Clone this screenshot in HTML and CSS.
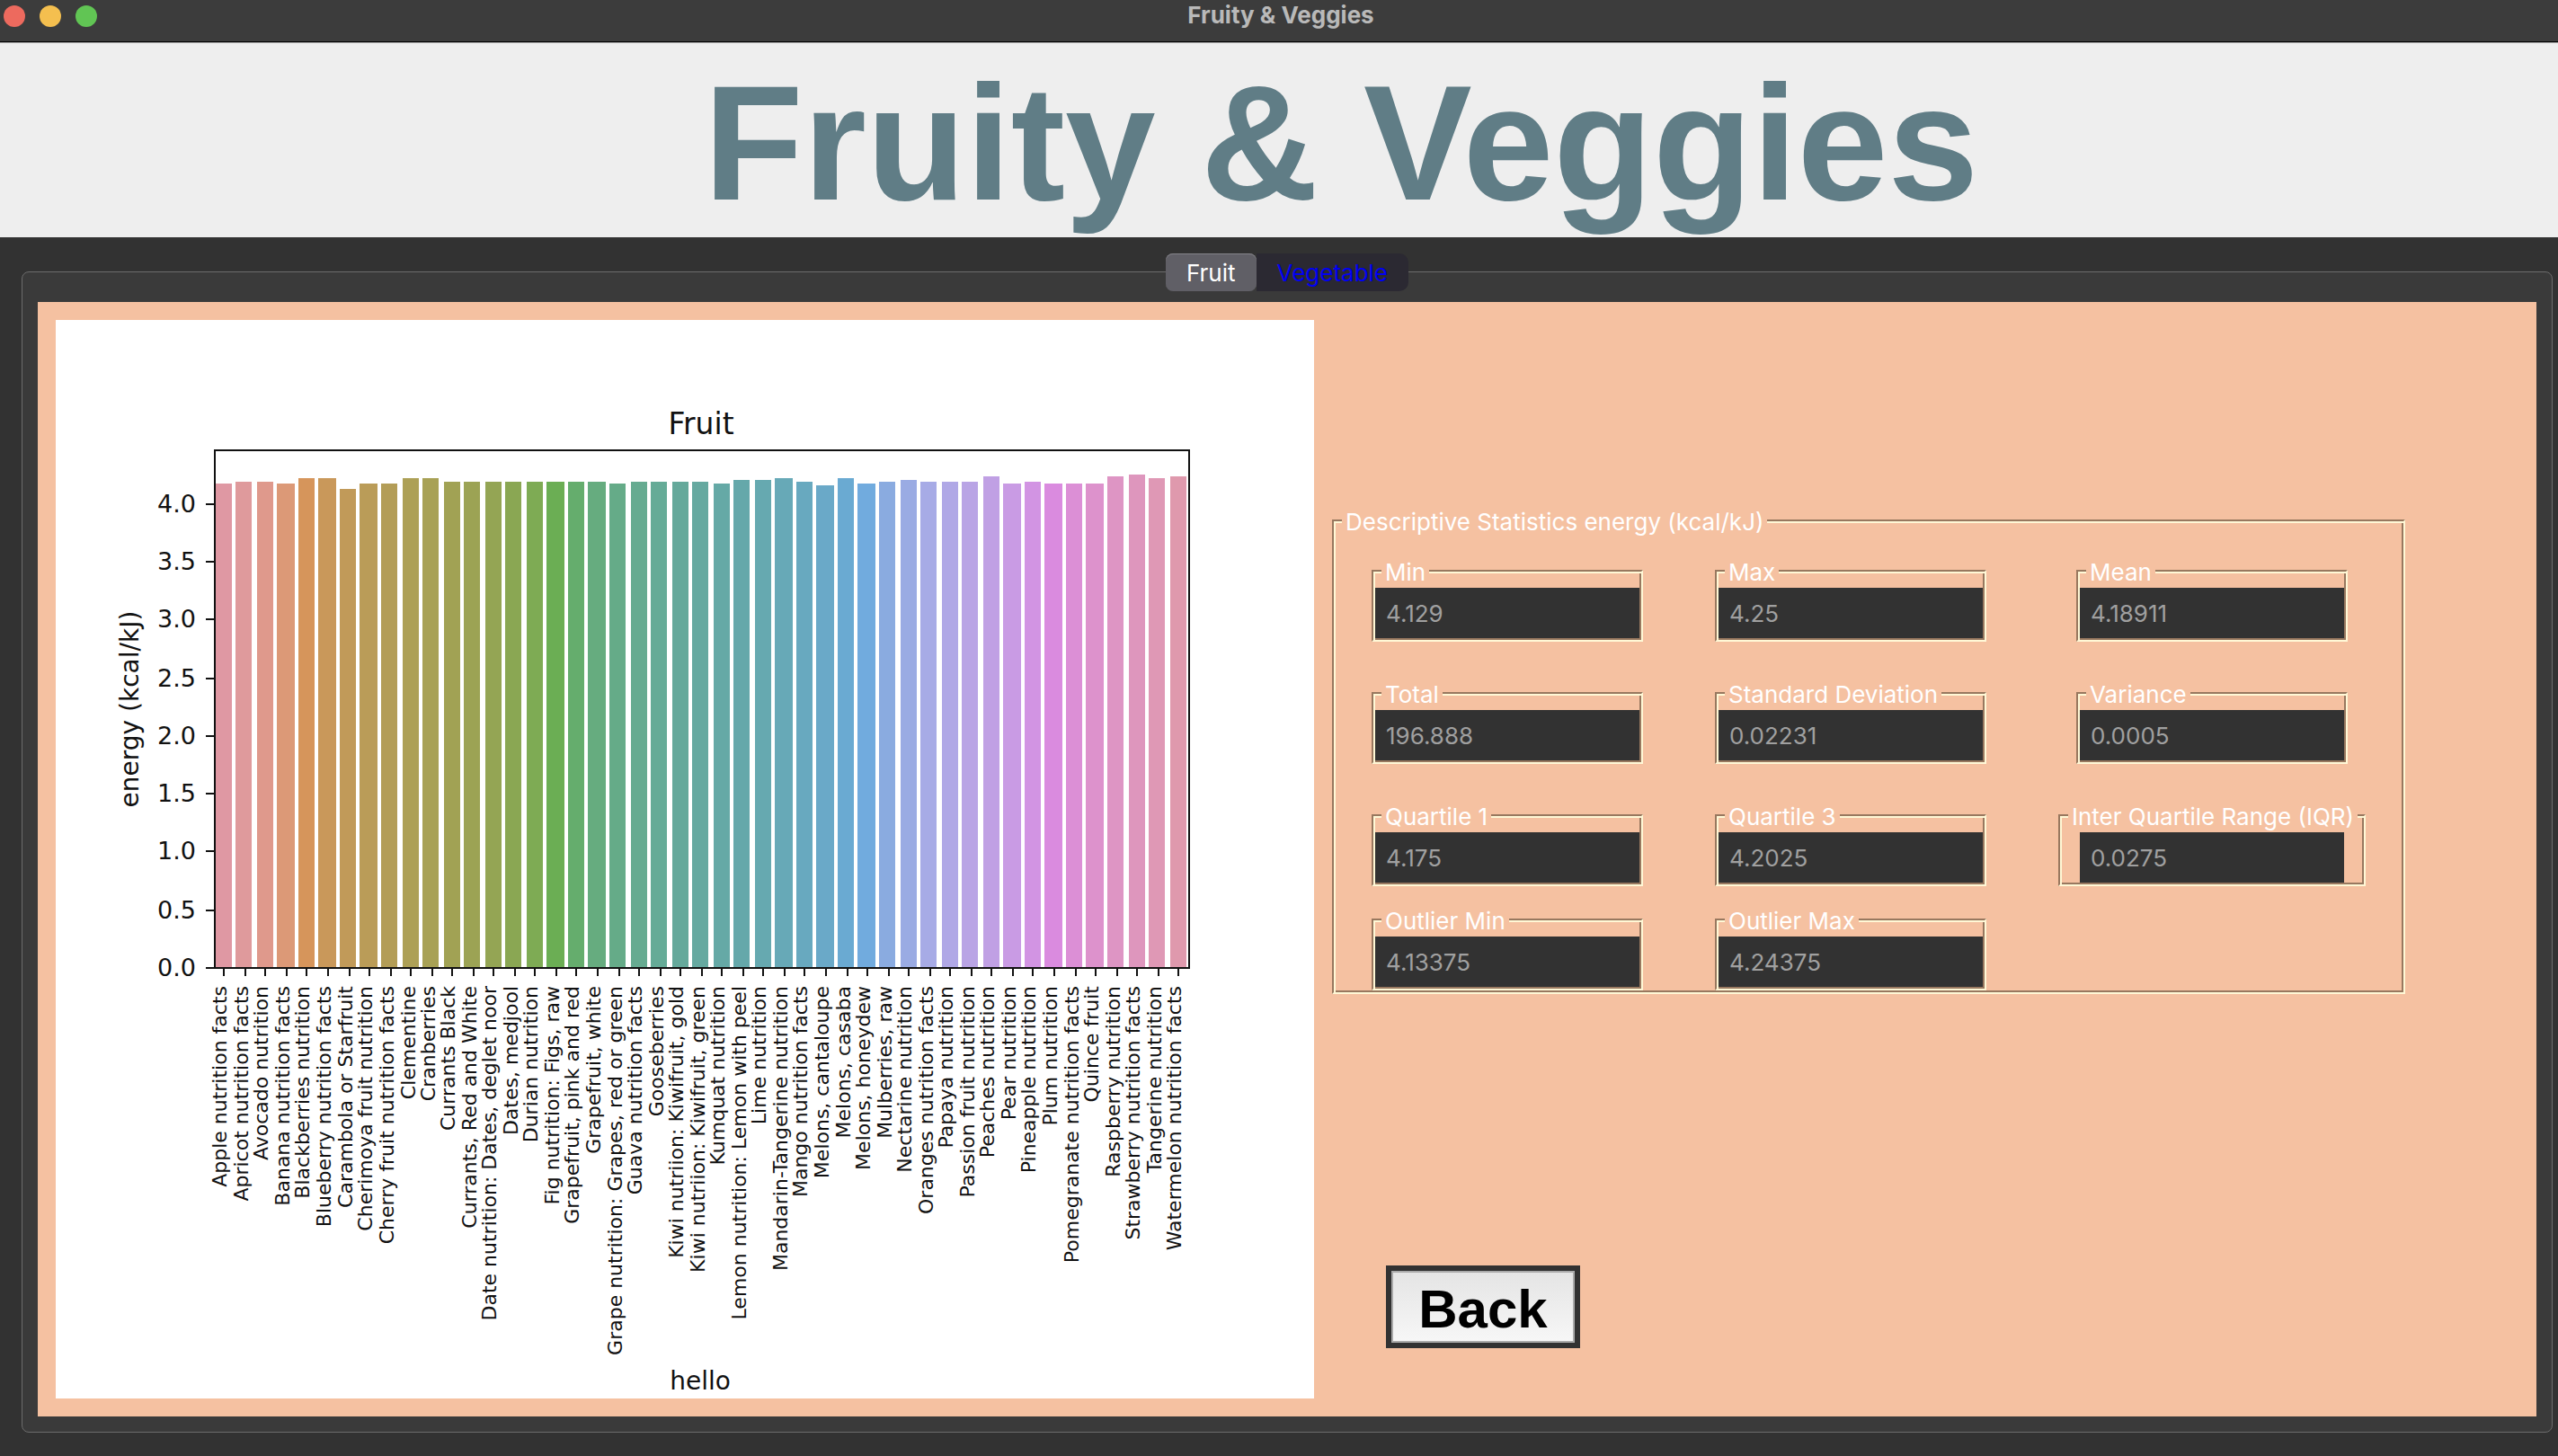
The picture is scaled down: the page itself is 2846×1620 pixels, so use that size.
FILE: index.html
```html
<!DOCTYPE html>
<html lang="en">
<head>
<meta charset="utf-8">
<title>Fruity &amp; Veggies</title>
<link rel="stylesheet" href="styles.css">
</head>
<body>
<div class="titlebar">
  <span class="lights"><i class="light light-close"></i><i class="light light-min"></i><i class="light light-max"></i></span>
  <span class="window-title">Fruity &amp; Veggies</span>
</div>
<header class="banner"><h1 class="banner-title">Fruity &amp; Veggies</h1></header>
<main class="main">
  <div class="tabs" role="tablist">
    <button class="tab tab-active" role="tab" aria-selected="true">Fruit</button><button class="tab tab-idle" role="tab" aria-selected="false">Vegetable</button>
  </div>
  <div class="pane">
    <div class="board">
      <figure class="figure">
        <svg class="chart" viewBox="0 0 1400 1200" role="img" aria-label="Fruit: energy (kcal/kJ)">
          <text class="chart-title" x="718" y="127">Fruit</text>
          <g class="bars">
            <path fill="#df98a3" d="M178 182h18v539h-18z"/>
            <path fill="#df9a9c" d="M200 180h18v541h-18z"/>
            <path fill="#df998c" d="M224 180h18v541h-18z"/>
            <path fill="#dc9977" d="M246 182h20v539h-20z"/>
            <path fill="#d6955b" d="M270 176h18v545h-18z"/>
            <path fill="#c9985a" d="M292 176h20v545h-20z"/>
            <path fill="#c19a59" d="M316 188h18v533h-18z"/>
            <path fill="#ba9c58" d="M338 182h20v539h-20z"/>
            <path fill="#b39d57" d="M362 182h18v539h-18z"/>
            <path fill="#ada056" d="M386 176h18v545h-18z"/>
            <path fill="#a8a155" d="M408 176h18v545h-18z"/>
            <path fill="#a1a254" d="M432 180h18v541h-18z"/>
            <path fill="#9ca354" d="M454 180h18v541h-18z"/>
            <path fill="#94a554" d="M478 180h18v541h-18z"/>
            <path fill="#8aa753" d="M500 180h18v541h-18z"/>
            <path fill="#7eab54" d="M524 180h18v541h-18z"/>
            <path fill="#6bae54" d="M546 180h20v541h-20z"/>
            <path fill="#65ad6d" d="M570 180h18v541h-18z"/>
            <path fill="#66ac7f" d="M592 180h20v541h-20z"/>
            <path fill="#65ab88" d="M616 182h18v539h-18z"/>
            <path fill="#66ab91" d="M640 180h18v541h-18z"/>
            <path fill="#65ab97" d="M662 180h18v541h-18z"/>
            <path fill="#65a99b" d="M686 180h18v541h-18z"/>
            <path fill="#66a9a0" d="M708 180h18v541h-18z"/>
            <path fill="#65a9a6" d="M732 182h18v539h-18z"/>
            <path fill="#65a8aa" d="M754 178h18v543h-18z"/>
            <path fill="#66a9b0" d="M778 178h18v543h-18z"/>
            <path fill="#67a9b7" d="M800 176h20v545h-20z"/>
            <path fill="#68a9bf" d="M824 180h18v541h-18z"/>
            <path fill="#6aa9c8" d="M846 184h20v537h-20z"/>
            <path fill="#6aaad2" d="M870 176h18v545h-18z"/>
            <path fill="#71abde" d="M892 182h20v539h-20z"/>
            <path fill="#8aabe0" d="M916 180h18v541h-18z"/>
            <path fill="#9aabe3" d="M940 178h18v543h-18z"/>
            <path fill="#a7abe6" d="M962 180h18v541h-18z"/>
            <path fill="#b0a8e6" d="M986 180h18v541h-18z"/>
            <path fill="#b9a4e5" d="M1008 180h18v541h-18z"/>
            <path fill="#c0a0e4" d="M1032 174h18v547h-18z"/>
            <path fill="#c99be4" d="M1054 182h20v539h-20z"/>
            <path fill="#d294e3" d="M1078 180h18v541h-18z"/>
            <path fill="#da8bdf" d="M1100 182h20v539h-20z"/>
            <path fill="#dc8fd6" d="M1124 182h18v539h-18z"/>
            <path fill="#dd92cc" d="M1146 182h20v539h-20z"/>
            <path fill="#de95c4" d="M1170 174h18v547h-18z"/>
            <path fill="#de96bd" d="M1194 172h18v549h-18z"/>
            <path fill="#df98b5" d="M1216 176h18v545h-18z"/>
            <path fill="#df99ad" d="M1240 174h18v547h-18z"/>
          </g>
          <path class="axis" d="M177 145H1261V721H177z"/>
          <path class="axis" d="M167 205h10M167 269h10M167 333h10M167 399h10M167 463h10M167 527h10M167 591h10M167 657h10M167 721h10"/>
          <path class="axis" d="M187 721v9M211 721v9M233 721v9M257 721v9M279 721v9M303 721v9M327 721v9M349 721v9M373 721v9M395 721v9M419 721v9M441 721v9M465 721v9M487 721v9M511 721v9M533 721v9M557 721v9M579 721v9M603 721v9M627 721v9M649 721v9M673 721v9M695 721v9M719 721v9M741 721v9M765 721v9M787 721v9M811 721v9M833 721v9M857 721v9M881 721v9M903 721v9M927 721v9M949 721v9M973 721v9M995 721v9M1019 721v9M1041 721v9M1065 721v9M1087 721v9M1111 721v9M1135 721v9M1157 721v9M1181 721v9M1203 721v9M1227 721v9M1249 721v9"/>
          <g class="y-labels">
            <text x="156" y="214">4.0</text>
            <text x="156" y="278">3.5</text>
            <text x="156" y="342">3.0</text>
            <text x="156" y="408">2.5</text>
            <text x="156" y="472">2.0</text>
            <text x="156" y="536">1.5</text>
            <text x="156" y="600">1.0</text>
            <text x="156" y="666">0.5</text>
            <text x="156" y="730">0.0</text>
          </g>
          <text class="axis-name" transform="translate(92 433) rotate(-90)">energy (kcal/kJ)</text>
          <g class="x-labels">
            <text transform="translate(190 741) rotate(-90)">Apple nutrition facts</text>
            <text transform="translate(214 741) rotate(-90)">Apricot nutrition facts</text>
            <text transform="translate(236 741) rotate(-90)">Avocado nutrition</text>
            <text transform="translate(260 741) rotate(-90)">Banana nutrition facts</text>
            <text transform="translate(282 741) rotate(-90)">Blackberries nutrition</text>
            <text transform="translate(306 741) rotate(-90)">Blueberry nutrition facts</text>
            <text transform="translate(330 741) rotate(-90)">Carambola or Starfruit</text>
            <text transform="translate(352 741) rotate(-90)">Cherimoya fruit nutrition</text>
            <text transform="translate(376 741) rotate(-90)">Cherry fruit nutrition facts</text>
            <text transform="translate(400 741) rotate(-90)">Clementine</text>
            <text transform="translate(422 741) rotate(-90)">Cranberries</text>
            <text transform="translate(444 741) rotate(-90)">Currants Black</text>
            <text transform="translate(468 741) rotate(-90)">Currants, Red and White</text>
            <text transform="translate(490 741) rotate(-90)">Date nutrition: Dates, deglet noor</text>
            <text transform="translate(514 741) rotate(-90)">Dates, medjool</text>
            <text transform="translate(536 741) rotate(-90)">Durian nutrition</text>
            <text transform="translate(560 741) rotate(-90)">Fig nutrition: Figs, raw</text>
            <text transform="translate(582 741) rotate(-90)">Grapefruit, pink and red</text>
            <text transform="translate(606 741) rotate(-90)">Grapefruit, white</text>
            <text transform="translate(630 741) rotate(-90)">Grape nutrition: Grapes, red or green</text>
            <text transform="translate(652 741) rotate(-90)">Guava nutrition facts</text>
            <text transform="translate(676 741) rotate(-90)">Gooseberries</text>
            <text transform="translate(698 741) rotate(-90)">Kiwi nutriion: Kiwifruit, gold</text>
            <text transform="translate(722 741) rotate(-90)">Kiwi nutriion: Kiwifruit, green</text>
            <text transform="translate(744 741) rotate(-90)">Kumquat nutrition</text>
            <text transform="translate(768 741) rotate(-90)">Lemon nutrition: Lemon with peel</text>
            <text transform="translate(790 741) rotate(-90)">Lime nutrition</text>
            <text transform="translate(814 741) rotate(-90)">Mandarin-Tangerine nutrition</text>
            <text transform="translate(836 741) rotate(-90)">Mango nutrition facts</text>
            <text transform="translate(860 741) rotate(-90)">Melons, cantaloupe</text>
            <text transform="translate(884 741) rotate(-90)">Melons, casaba</text>
            <text transform="translate(906 741) rotate(-90)">Melons, honeydew</text>
            <text transform="translate(930 741) rotate(-90)">Mulberries, raw</text>
            <text transform="translate(952 741) rotate(-90)">Nectarine nutrition</text>
            <text transform="translate(976 741) rotate(-90)">Oranges nutrition facts</text>
            <text transform="translate(998 741) rotate(-90)">Papaya nutrition</text>
            <text transform="translate(1022 741) rotate(-90)">Passion fruit nutrition</text>
            <text transform="translate(1044 741) rotate(-90)">Peaches nutrition</text>
            <text transform="translate(1068 741) rotate(-90)">Pear nutrition</text>
            <text transform="translate(1090 741) rotate(-90)">Pineapple nutrition</text>
            <text transform="translate(1114 741) rotate(-90)">Plum nutrition</text>
            <text transform="translate(1138 741) rotate(-90)">Pomegranate nutrition facts</text>
            <text transform="translate(1160 741) rotate(-90)">Quince fruit</text>
            <text transform="translate(1184 741) rotate(-90)">Raspberry nutrition</text>
            <text transform="translate(1206 741) rotate(-90)">Strawberry nutrition facts</text>
            <text transform="translate(1230 741) rotate(-90)">Tangerine nutrition</text>
            <text transform="translate(1252 741) rotate(-90)">Watermelon nutrition facts</text>
          </g>
          <text class="axis-name" x="717" y="1190">hello</text>
        </svg>
      </figure>
      <section class="side">
        <fieldset class="group">
          <legend class="legend">Descriptive Statistics energy (kcal/kJ)</legend>
          <div class="stats">
            <div class="stats-grid">
              <fieldset class="group"><legend class="legend"><label for="min">Min</label></legend><input class="value" id="min" value="4.129" readonly></fieldset>
              <fieldset class="group"><legend class="legend"><label for="max">Max</label></legend><input class="value" id="max" value="4.25" readonly></fieldset>
              <fieldset class="group"><legend class="legend"><label for="mean">Mean</label></legend><input class="value" id="mean" value="4.18911" readonly></fieldset>
              <fieldset class="group"><legend class="legend"><label for="total">Total</label></legend><input class="value" id="total" value="196.888" readonly></fieldset>
              <fieldset class="group"><legend class="legend"><label for="sd">Standard Deviation</label></legend><input class="value" id="sd" value="0.02231" readonly></fieldset>
              <fieldset class="group"><legend class="legend"><label for="var">Variance</label></legend><input class="value" id="var" value="0.0005" readonly></fieldset>
              <fieldset class="group"><legend class="legend"><label for="q1">Quartile 1</label></legend><input class="value" id="q1" value="4.175" readonly></fieldset>
              <fieldset class="group"><legend class="legend"><label for="q3">Quartile 3</label></legend><input class="value" id="q3" value="4.2025" readonly></fieldset>
              <fieldset class="group"><legend class="legend"><label for="iqr">Inter Quartile Range (IQR)</label></legend><div class="value-inset"><input class="value" id="iqr" value="0.0275" readonly></div></fieldset>
            </div>
            <div class="stats-grid stats-outliers">
              <fieldset class="group"><legend class="legend"><label for="omin">Outlier Min</label></legend><input class="value" id="omin" value="4.13375" readonly></fieldset>
              <fieldset class="group"><legend class="legend"><label for="omax">Outlier Max</label></legend><input class="value" id="omax" value="4.24375" readonly></fieldset>
            </div>
          </div>
        </fieldset>
        <button class="back">Back</button>
      </section>
    </div>
  </div>
</main>
</body>
</html>
```
FILE: styles.css
```css
* { box-sizing: border-box; }

body {
  margin: 0;
  min-height: 100vh;
  background: #323232;
  font-family: Inter, "Liberation Sans", sans-serif;
  font-size: 26px;
}

.titlebar {
  display: grid;
  grid-template-columns: 1fr auto 1fr;
  align-items: start;
  height: 48px;
  padding-left: 4px;
  background: #3c3c3c;
  border-bottom: 1px solid #a8a8a8;
  box-shadow: inset 0 -1px #000;
}
.lights { display: flex; gap: 16px; padding-top: 6px; }
.light { width: 24px; height: 24px; border-radius: 50%; }
.light-close { background: #ed6a5e; }
.light-min { background: #f4bf4f; }
.light-max { background: #61c554; }
.window-title { color: #b9b9b9; font-weight: 700; line-height: 34px; }

.banner { background: #eee; padding: 7px 0 0 138px; }
.banner-title {
  margin: 0;
  color: #607d86;
  font: bold 181px/209px "Liberation Sans", Arial, sans-serif;
  text-align: center;
  white-space: nowrap;
}

.main { padding: 18px 6px 26px 24px; }

.tabs { position: relative; display: flex; justify-content: center; }
.tab {
  height: 42px;
  padding: 0 23px;
  border: 0;
  font: inherit;
}
.tab-active {
  background: #605f66;
  color: #fff;
  border-radius: 8px;
  box-shadow: inset 0 1px #85848a;
}
.tab-idle {
  background: #2b2932;
  color: #0000f5;
  border-radius: 0 10px 10px 0;
}

.pane {
  margin-top: -22px;
  padding: 33px 17px 17px;
  background: #3a3a3a;
  border: 1px solid #6c6c6c;
  border-radius: 8px;
}
.board {
  display: flex;
  gap: 20px;
  padding: 20px;
  background: #f5c1a1;
}

.figure { flex: 35 1 0; margin: 0; background: #fff; }
.chart {
  display: block;
  width: 100%;
  font-family: "DejaVu Sans", sans-serif;
  fill: #111;
}
.chart-title { font-size: 33px; text-anchor: middle; }
.axis { fill: none; stroke: #111; stroke-width: 2px; }
.axis-name { font-size: 28px; text-anchor: middle; }
.y-labels { font-size: 27px; text-anchor: end; }
.x-labels { font-size: 22px; text-anchor: end; }

.side {
  flex: 33 1 0;
  display: flex;
  flex-direction: column;
  align-items: flex-start;
  justify-content: space-between;
  padding: 206px 0 56px;
}

.group {
  min-width: 0;
  margin: 0;
  padding: 2px;
  border: 2px solid;
  border-color: #98785f #fff8d6 #fff8d6 #98785f;
  box-shadow: inset 2px 2px #fff8d6, inset -2px -2px #98785f;
}
.legend {
  height: 34px;
  margin-left: 7px;
  padding: 4px 4px 0;
  background: #f5c1a1;
  color: #fff;
  line-height: 30px;
  white-space: nowrap;
}
.stats { padding: 20px 40px 0; }
.stats-grid {
  display: grid;
  grid-template-columns: 302px 302px 342px;
  gap: 40px 80px;
  justify-items: center;
}
.stats-outliers { margin-top: 20px; }
.value-inset { padding: 0 20px; }
.value {
  display: block;
  width: 294px;
  height: 56px;
  padding: 0 12px;
  border: 0;
  background: #323232;
  color: #a0a0a0;
  font: inherit;
}

.back {
  width: 216px;
  height: 92px;
  margin-left: 60px;
  padding: 6px 0 0;
  border: 6px solid #323232;
  background: linear-gradient(#e4e4e4, #f7f7f7);
  box-shadow: inset 0 0 0 2px #aaa;
  color: #000;
  font: bold 60px/66px "Liberation Sans", Arial, sans-serif;
}
```
